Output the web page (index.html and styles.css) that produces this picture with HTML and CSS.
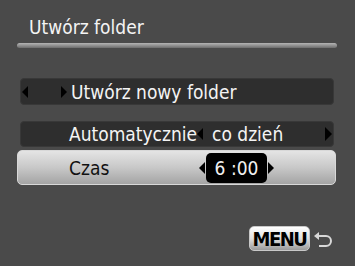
FILE: index.html
```html
<!DOCTYPE html>
<html>
<head>
<meta charset="utf-8">
<link rel="stylesheet" href="styles.css">
</head>
<body>
<div class="screen">
  <div class="title">Utwórz folder</div>
  <div class="sep"></div>
  <div class="row row-new">
    <span class="tri tri-l"></span>
    <span class="tri tri-r r1"></span>
    <span class="txt">Utwórz nowy folder</span>
  </div>
  <div class="row row-auto">
    <span class="label">Automatycznie</span>
    <span class="tri tri-l"></span>
    <span class="value">co dzień</span>
    <span class="tri tri-r big"></span>
  </div>
  <div class="row row-time">
    <span class="label">Czas</span>
    <span class="tri tri-l"></span>
    <span class="box">6 :00</span>
    <span class="tri tri-r after"></span>
  </div>
  <div class="footer">
    <span class="menu">MENU</span>
    <svg class="back" width="20" height="16" viewBox="0 0 20 16">
      <path d="M6 1 L1 5 L6 9 Z" fill="#d8d8d8"/>
      <path d="M5 5 H13 A5 5 0 0 1 13 15 H6" fill="none" stroke="#d8d8d8" stroke-width="2"/>
    </svg>
  </div>
</div>
</body>
</html>
```
FILE: styles.css
```css
html, body {
  margin: 0;
  padding: 0;
  background: #4a4a4a;
}
.screen {
  width: 355px;
  height: 266px;
  display: flex;
  flex-direction: column;
  font-family: "DejaVu Sans Condensed", "Liberation Sans Narrow", sans-serif;
  color: #f4f4f4;
  font-size: 19px;
}
.tri {
  flex-shrink: 0;
  width: 0;
  height: 0;
  border-top: 6px solid transparent;
  border-bottom: 6px solid transparent;
}
.tri-l {
  border-right: 6px solid #000;
}
.tri-r {
  border-left: 6px solid #000;
}
.tri.big {
  border-top-width: 7px;
  border-bottom-width: 7px;
  border-left-width: 7px;
}
.title {
  padding-left: 29px;
  margin-top: 16px;
  height: 26px;
  line-height: 22px;
}
.sep {
  margin: 1px 18px 0 17px;
  height: 5px;
  border-radius: 3px;
  background: linear-gradient(#b4b4b4, #8a8a8a 60%, #6c6c6c);
}
.row {
  display: flex;
  align-items: center;
  box-sizing: border-box;
  border-radius: 4px;
}
.row-new {
  margin: 30px 21px 0 20px;
  height: 27px;
  background: #2e2e2e;
  border: 1px solid #383838;
  padding-left: 1px;
}
.row-new .r1 {
  margin-left: 33px;
}
.row-new .txt {
  margin-left: 4px;
}
.row-auto {
  margin: 16px 21px 0 20px;
  height: 26px;
  background: #2e2e2e;
  border: 1px solid #383838;
  padding-left: 48px;
}
.row-auto .label {
  width: 128px;
}
.row-auto .value {
  margin-left: 9px;
  flex: 1;
}
.row-auto .big {
  margin-right: 1px;
}
.row-time {
  margin: 3px 19px 0 17px;
  height: 35px;
  background: linear-gradient(#e4e4e4, #c8c8c8 50%, #a4a4a4);
  border: 1px solid #d8d8d8;
  border-radius: 5px;
  padding-left: 51px;
  color: #111;
}
.row-time .label {
  width: 130px;
}
.row-time .box {
  width: 61px;
  height: 30px;
  margin-left: 1px;
  flex-shrink: 0;
  box-sizing: border-box;
  background: #000;
  color: #f0f0f0;
  border-radius: 5px;
  display: flex;
  align-items: center;
  justify-content: center;
}
.row-time .after {
  margin-left: 1px;
}
.footer {
  margin-top: 41px;
  display: flex;
  align-items: center;
  padding-left: 249px;
}
.menu {
  width: 61px;
  height: 25px;
  box-sizing: border-box;
  border-radius: 5px;
  background: linear-gradient(#ffffff, #e0e0e0 50%, #9a9a9a);
  border: 1px solid #c8c8c8;
  color: #000;
  font-family: "DejaVu Sans Condensed", sans-serif;
  font-weight: bold;
  font-size: 20px;
  display: flex;
  align-items: center;
  justify-content: center;
  letter-spacing: -1.5px;
}
.back {
  margin-left: 3px;
}
```
